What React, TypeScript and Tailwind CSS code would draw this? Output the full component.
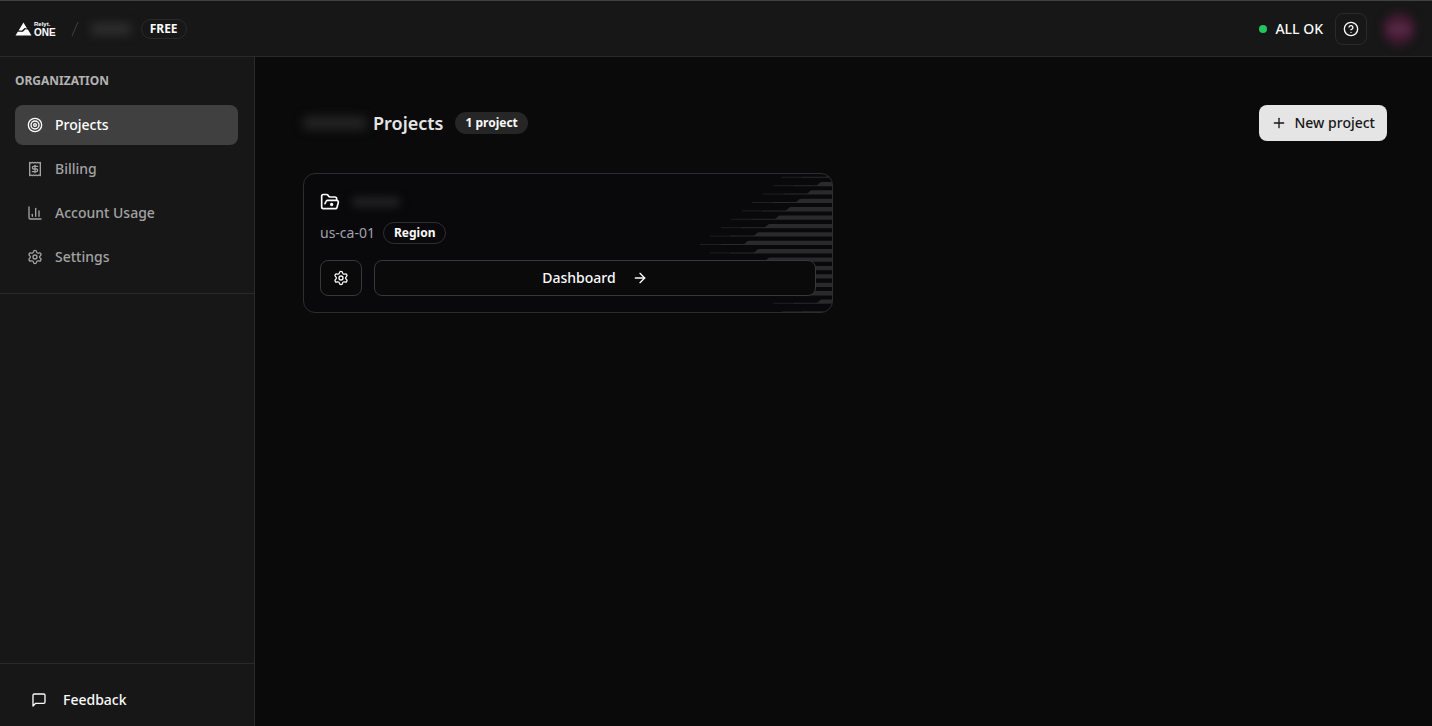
import {
  ArrowRight,
  ChartColumn,
  CircleQuestionMark,
  FolderOpenDot,
  Plus,
  Receipt,
  Settings,
  Target,
} from "lucide-react";

const links = [
  { label: "Projects", icon: Target, active: true },
  { label: "Billing", icon: Receipt, active: false },
  { label: "Account Usage", icon: ChartColumn, active: false },
  { label: "Settings", icon: Settings, active: false },
];

const Logo = () => (
  <a href="#" title="Relyt ONE" className="flex items-center gap-0.5 text-white">
    <svg width="17" height="14" viewBox="0 0 17 14" fill="currentColor">
      <path d="M8.5 0.5 12 6.4 9.6 6 7 8.6 3.6 8.6Z" />
      <path d="M12.8 7.6 16.5 13.5H0.5L2.8 9.8H8L10.4 7.3Z" />
    </svg>
    <span className="flex flex-col font-['Liberation_Sans',sans-serif]">
      <span className="text-[6px] leading-[7px] font-bold">Relyt.</span>
      <span className="text-[10px] leading-[9px] font-bold">ONE</span>
    </span>
  </a>
);

const FeedbackIcon = () => (
  <svg
    width="16"
    height="16"
    viewBox="0 0 24 24"
    fill="none"
    stroke="currentColor"
    strokeWidth="2"
    strokeLinecap="round"
    strokeLinejoin="round"
  >
    <path d="M21 15a2 2 0 0 1-2 2H7l-4 4V5a2 2 0 0 1 2-2h14a2 2 0 0 1 2 2z" />
  </svg>
);

// Left edge of each stripe, top to bottom
const stripes = [82, 73, 63, 52, 42, 31, 21, 10, 0, 10, 21, 31, 42, 52, 63, 73, 82];

const Stripes = () => (
  <svg
    className="absolute top-0 right-0"
    width="132"
    height="138"
    viewBox="0 0 132 138"
  >
    {stripes.map((x, i) => {
      const y = 3.8 + i * 8.4;
      return (
        <g key={i}>
          <path d={`M${x} ${y - 0.5}h22`} stroke="#1f1f22" />
          <path
            d={`M${x + 21} ${y - 1}h22q2 0 3-1.6t3-1.7H133v4.3H${x + 21}z`}
            fill="#2a2a2d"
          />
        </g>
      );
    })}
  </svg>
);

const Header = () => (
  <header className="flex h-[57px] shrink-0 items-center justify-between border-t border-b border-t-[#404040] border-b-[#2a2a2a] bg-[#171717] pr-[17px] pl-[15px]">
    <div className="flex items-center">
      <Logo />
      <svg className="ml-[15px]" width="8" height="16" viewBox="0 0 8 16">
        <path d="M1 15 7 1" stroke="#404040" />
      </svg>
      <span className="ml-3 h-3 w-10 rounded bg-[#2e2e2e] blur-[5px]" />
      <span className="ml-2.5 rounded-full border border-[#2a2a2a] px-2 text-xs leading-[18px] font-bold">
        FREE
      </span>
    </div>
    <div className="flex items-center">
      <span className="mr-2 size-2 rounded-full bg-[#22c55e]" />
      <span className="mr-3 text-sm font-medium">ALL OK</span>
      <button
        type="button"
        title="Help"
        className="flex size-8 items-center justify-center rounded-lg border border-[#2a2a2a]"
      >
        <CircleQuestionMark size={16} />
      </button>
      <button
        type="button"
        title="Account"
        className="ml-4 flex size-8 items-center justify-center blur-[4px]"
      >
        <span className="flex size-8 items-center justify-center rounded-full bg-[#431a32]">
          <span className="h-2 w-5 bg-[#5a2f48]" />
        </span>
      </button>
    </div>
  </header>
);

const Sidebar = () => (
  <aside className="flex w-[255px] shrink-0 flex-col border-r border-[#2a2a2a] bg-[#171717]">
    <div className="border-b border-[#2a2a2a] py-4 pr-4 pl-[15px]">
      <p className="text-xs leading-4 font-bold text-[#b3b3b3]">ORGANIZATION</p>
      <nav className="mt-4 flex flex-col gap-1">
        {links.map(({ label, icon: Icon, active }) => (
          <a
            key={label}
            href="#"
            className={`flex h-10 items-center gap-3 rounded-lg px-3 text-sm font-medium ${
              active ? "bg-[#404040] text-white" : "text-[#a3a3a3]"
            }`}
          >
            <Icon size={16} />
            {label}
          </a>
        ))}
      </nav>
    </div>
    <div className="mt-auto border-t border-[#2a2a2a] pt-4 pb-1.5 pl-[15px]">
      <button
        type="button"
        className="flex h-10 items-center gap-4 px-4 text-sm font-medium"
      >
        <FeedbackIcon />
        Feedback
      </button>
    </div>
  </aside>
);

const ProjectCard = () => (
  <article className="relative overflow-hidden rounded-xl border border-[#2e2e31] bg-[#09090b] p-4">
    <Stripes />
    <div className="flex h-6 items-center gap-3">
      <FolderOpenDot size={20} />
      <span className="h-2.5 w-12 rounded bg-[#222224] blur-[4px]" />
    </div>
    <div className="mt-2 flex items-center gap-2">
      <span className="text-sm text-[#a1a1aa]">us-ca-01</span>
      <span className="rounded-full border border-[#2e2e31] px-2.5 text-xs leading-5 font-bold">
        Region
      </span>
    </div>
    <div className="relative mt-4 flex gap-3">
      <button
        type="button"
        title="Project settings"
        className="flex h-9 w-[42px] items-center justify-center rounded-lg border border-[#383838] bg-[#0a0a0a]"
      >
        <Settings size={16} />
      </button>
      <button
        type="button"
        className="flex h-9 grow items-center justify-center gap-4 rounded-lg border border-[#383838] bg-[#0a0a0a] text-sm font-medium"
      >
        Dashboard
        <ArrowRight size={16} />
      </button>
    </div>
  </article>
);

const App = () => {
  return (
    <div className="flex min-h-screen flex-col bg-[#0a0a0a] font-['Noto_Sans',sans-serif] text-[#fafafa]">
      <Header />
      <div className="flex grow">
        <Sidebar />
        <main className="grow px-12 pt-12 pr-[45px]">
          <div className="flex items-center justify-between">
            <div className="flex items-center">
              <span className="h-3.5 w-16 rounded bg-[#222222] blur-[5px]" />
              <h1 className="ml-1.5 text-lg font-semibold text-[#e5e5e5]">Projects</h1>
              <span className="ml-3 rounded-full bg-[#262626] px-2.5 py-px text-xs leading-5 font-bold">
                1 project
              </span>
            </div>
            <button
              type="button"
              className="flex h-9 items-center gap-2 rounded-lg bg-[#e5e5e5] px-3 text-sm font-medium text-[#171717]"
            >
              <Plus size={16} />
              New project
            </button>
          </div>
          <div className="mt-8 grid grid-cols-2 gap-6">
            <ProjectCard />
          </div>
        </main>
      </div>
    </div>
  );
};

export default App;
